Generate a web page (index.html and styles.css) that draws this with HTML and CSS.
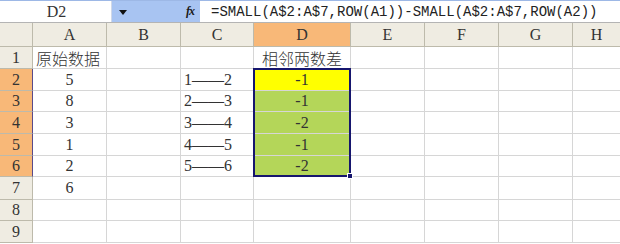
FILE: index.html
```html
<!DOCTYPE html>
<html>
<head>
<meta charset="utf-8">
<link rel="stylesheet" href="styles.css">
</head>
<body>
<div class="app">
  <div class="fbar">
    <div class="namebox">D2</div>
    <div class="dd"><svg width="8" height="5" viewBox="0 0 8 5"><path d="M0 0H8L4 5Z" fill="#111"/></svg></div>
    <div class="fxzone"><span class="fx">fx</span></div>
    <div class="formula">=SMALL(A$2:A$7,ROW(A1))-SMALL(A$2:A$7,ROW(A2))</div>
  </div>
  <div class="sheet">
    <div class="h corner"></div>
    <div class="h">A</div><div class="h">B</div><div class="h">C</div><div class="h sel">D</div><div class="h">E</div><div class="h">F</div><div class="h">G</div><div class="h last">H</div>

    <div class="h rn">1</div>
    <div class="c left cjk">原始数据</div><div class="c"></div><div class="c"></div><div class="c cjk">相邻两数差</div><div class="c"></div><div class="c"></div><div class="c"></div><div class="c last"></div>

    <div class="h rn rsel">2</div>
    <div class="c">5</div><div class="c"></div><div class="c left">1——2</div><div class="c yellow anchor">-1<div class="selbox"><span class="handle"></span></div></div><div class="c"></div><div class="c"></div><div class="c"></div><div class="c last"></div>

    <div class="h rn rsel">3</div>
    <div class="c">8</div><div class="c"></div><div class="c left">2——3</div><div class="c green">-1</div><div class="c"></div><div class="c"></div><div class="c"></div><div class="c last"></div>

    <div class="h rn rsel">4</div>
    <div class="c">3</div><div class="c"></div><div class="c left">3——4</div><div class="c green">-2</div><div class="c"></div><div class="c"></div><div class="c"></div><div class="c last"></div>

    <div class="h rn rsel">5</div>
    <div class="c">1</div><div class="c"></div><div class="c left">4——5</div><div class="c green">-1</div><div class="c"></div><div class="c"></div><div class="c"></div><div class="c last"></div>

    <div class="h rn rsel">6</div>
    <div class="c">2</div><div class="c"></div><div class="c left">5——6</div><div class="c green">-2</div><div class="c"></div><div class="c"></div><div class="c"></div><div class="c last"></div>

    <div class="h rn">7</div>
    <div class="c">6</div><div class="c"></div><div class="c"></div><div class="c"></div><div class="c"></div><div class="c"></div><div class="c"></div><div class="c last"></div>

    <div class="h rn">8</div>
    <div class="c"></div><div class="c"></div><div class="c"></div><div class="c"></div><div class="c"></div><div class="c"></div><div class="c"></div><div class="c last"></div>

    <div class="h rn">9</div>
    <div class="c"></div><div class="c"></div><div class="c"></div><div class="c"></div><div class="c"></div><div class="c"></div><div class="c"></div><div class="c last"></div>
  </div>
</div>
</body>
</html>
```
FILE: styles.css
```css
* { box-sizing: border-box; }
html, body { margin: 0; padding: 0; background: #fff; }
body { width: 620px; height: 244px; overflow: hidden; }
.app { width: 620px; height: 244px; overflow: hidden; font-family: "Liberation Serif", "Noto Sans CJK SC", serif; color: #333; }

.fbar { display: flex; height: 23px; border-top: 1px solid #9db8e6; border-bottom: 1px solid #b4b4b4; }
.namebox { width: 112px; display: flex; align-items: center; justify-content: center; font-size: 16px; padding-left: 2px; background: #fff; border-right: 1px solid #d0d8e8; }
.dd { width: 21px; background: #a8c4f2; display: flex; align-items: center; justify-content: center; padding-top: 1px; }
.fxzone { width: 67px; background: #a8c4f2; display: flex; align-items: center; justify-content: flex-end; padding-right: 6px; }
.fx { font-style: italic; font-weight: bold; font-size: 12px; color: #1a1a1a; letter-spacing: -1px; }
.formula { flex: 1; display: flex; align-items: center; padding-left: 11px; font-family: "Liberation Mono", monospace; font-size: 14px; color: #222; white-space: nowrap; background: #fff; }

.sheet { display: grid; grid-template-columns: 33px 74px 74px 73px 97px 74px 74px 74px 1fr; grid-template-rows: 24px 22px 22px 21px 22px 22px 21px 23px 21px 22px; }
.h { background: #efece2; border-right: 1px solid #bdbaab; border-bottom: 1px solid #bdbaab; display: flex; align-items: center; justify-content: center; font-size: 16px; color: #333; }
.h.sel { background: #f8b878; }
.rn.rsel { background: #f8b878; border-right-color: #5a4a8a; }
.c { border-right: 1px solid #d6d6d6; border-bottom: 1px solid #d6d6d6; display: flex; align-items: center; justify-content: center; font-size: 16px; white-space: nowrap; }
.c.left { justify-content: flex-start; padding-left: 3px; }
.cjk { font-weight: 300; }
.last { border-right: none; }
.yellow { background: #ffff00; }
.green { background: #b4d659; }

.anchor { position: relative; }
.selbox { position: absolute; left: -1px; top: -1px; width: 98px; height: 109px; border: 2px solid #16166e; pointer-events: none; z-index: 2; }
.handle { position: absolute; right: -4px; bottom: -4px; width: 6px; height: 6px; background: #16166e; border: 1px solid #fff; }
```
